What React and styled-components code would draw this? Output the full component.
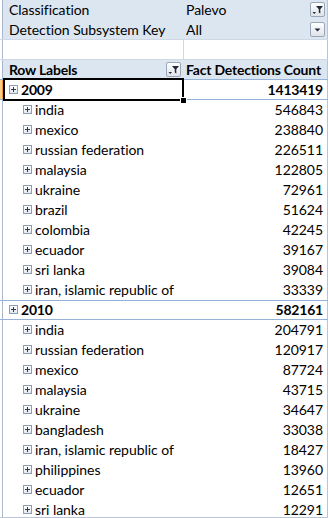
import React from "react";
import styled, { createGlobalStyle } from "styled-components";

const GlobalStyle = createGlobalStyle`
  html, body {
    margin: 0;
    padding: 0;
    background: #ffffff;
  }
  body {
    font-family: Lato, "Open Sans", "Liberation Sans", sans-serif;
    font-size: 14px;
    color: #000000;
  }
`;

const Sheet = styled.div`
  width: 328px;
  height: 517px;
  overflow: hidden;
  display: flex;
  flex-direction: column;
  border-bottom: 1px solid #b9c4d4;
  background: #ffffff;
`;

const Row = styled.div`
  display: grid;
  grid-template-columns: 3px 181px 143px 1px;
  height: 20px;
  flex: 0 0 20px;
  box-sizing: border-box;
  background: ${({ $shade }) => ($shade ? "#dce6f1" : "#ffffff")};
  border-top: ${({ $lineTop }) => ($lineTop ? "1px solid #95b3d7" : "none")};
  border-bottom: ${({ $lineBottom, $grid }) =>
    $lineBottom ? "1px solid #95b3d7" : $grid ? "1px solid #d0d7e5" : "none"};
  font-weight: ${({ $bold }) => ($bold ? 700 : 400)};
  letter-spacing: ${({ $bold }) => ($bold ? "-0.2px" : "-0.05px")};
`;

const Gutter = styled.div`
  box-sizing: border-box;
  background: ${({ $active }) => ($active ? "#f8d28c" : "#ffffff")};
  border-right: 1px solid ${({ $active }) => ($active ? "#f29436" : "#a9b8cc")};
`;

const Cell = styled.div`
  position: relative;
  box-sizing: border-box;
  display: flex;
  align-items: center;
  gap: 3px;
  padding: 0 ${({ $right }) => ($right ? "3px" : "0")} 1px
    ${({ $indent }) => $indent || 0}px;
  justify-content: ${({ $right }) => ($right ? "flex-end" : "flex-start")};
  border-right: ${({ $divider }) =>
    $divider ? "1px solid #d0d7e5" : "1px solid transparent"};
  white-space: nowrap;
  overflow: visible;

  ${({ $selected }) =>
    $selected &&
    `
    &::after {
      content: "";
      position: absolute;
      left: 0;
      top: -2px;
      right: -1px;
      bottom: -2px;
      border: 2px solid #000000;
      pointer-events: none;
    }
    &::before {
      content: "";
      position: absolute;
      right: -4px;
      bottom: -5px;
      width: 5px;
      height: 5px;
      background: #000000;
      border: 1px solid #ffffff;
      z-index: 2;
    }
  `}
`;

const EndCell = styled.div`
  border-left: 1px solid #b9c4d4;
`;

const Label = styled.span`
  flex: 1;
`;

const ButtonBox = styled.span`
  width: 15px;
  height: 15px;
  box-sizing: border-box;
  border: 1px solid #9aa6b6;
  border-radius: 2px;
  background: linear-gradient(#ffffff, #dfe4ea);
  display: flex;
  align-items: center;
  justify-content: center;
  margin-right: ${({ $gap }) => $gap || 0}px;
  flex: 0 0 auto;
`;

const Expander = styled.span`
  width: 9px;
  height: 9px;
  box-sizing: border-box;
  border: 1px solid #8d9db5;
  background: linear-gradient(#ffffff, #e3e8ef);
  display: inline-flex;
  align-items: center;
  justify-content: center;
  flex: 0 0 auto;
`;

const FilterIcon = () => (
  <svg width="13" height="13" viewBox="0 0 13 13">
    <path d="M5 3 H12 L9.3 6.3 V10.5 L7.8 9.5 V6.3 Z" fill="#1f2a3a" />
    <path d="M1.5 9 H5 L3.25 11 Z" fill="#1f2a3a" />
  </svg>
);

const ArrowIcon = () => (
  <svg width="13" height="13" viewBox="0 0 13 13">
    <path d="M3.5 5.5 H9.5 L6.5 8.5 Z" fill="#1f2a3a" />
  </svg>
);

const PlusIcon = () => (
  <svg width="7" height="7" viewBox="0 0 7 7">
    <path d="M1 3.5 H6 M3.5 1 V6" stroke="#2a3b55" strokeWidth="1" />
  </svg>
);

const filters = [
  { label: "Classification", value: "Palevo", icon: <FilterIcon /> },
  { label: "Detection Subsystem Key", value: "All", icon: <ArrowIcon /> },
];

const years = [
  {
    year: "2009",
    total: "1413419",
    items: [
      ["india", "546843"],
      ["mexico", "238840"],
      ["russian federation", "226511"],
      ["malaysia", "122805"],
      ["ukraine", "72961"],
      ["brazil", "51624"],
      ["colombia", "42245"],
      ["ecuador", "39167"],
      ["sri lanka", "39084"],
      ["iran, islamic republic of", "33339"],
    ],
  },
  {
    year: "2010",
    total: "582161",
    items: [
      ["india", "204791"],
      ["russian federation", "120917"],
      ["mexico", "87724"],
      ["malaysia", "43715"],
      ["ukraine", "34647"],
      ["bangladesh", "33038"],
      ["iran, islamic republic of", "18427"],
      ["philippines", "13960"],
      ["ecuador", "12651"],
      ["sri lanka", "12291"],
    ],
  },
];

export default function App() {
  return (
    <>
      <GlobalStyle />
      <Sheet>
        {filters.map((f, i) => (
          <Row key={f.label} $shade $grid={i === 1}>
            <Gutter />
            <Cell $indent={6}>{f.label}</Cell>
            <Cell $indent={2}>
              <Label>{f.value}</Label>
              <ButtonBox $gap={1}>{f.icon}</ButtonBox>
            </Cell>
            <EndCell />
          </Row>
        ))}

        <Row $grid>
          <Gutter />
          <Cell $divider />
          <Cell />
          <EndCell />
        </Row>

        <Row $shade $bold $lineBottom>
          <Gutter />
          <Cell $indent={6}>
            <Label>Row Labels</Label>
            <ButtonBox $gap={2}>
              <FilterIcon />
            </ButtonBox>
          </Cell>
          <Cell $indent={2}>Fact Detections Count</Cell>
          <EndCell />
        </Row>

        {years.map((y, yi) => (
          <React.Fragment key={y.year}>
            <Row $bold $lineTop={yi > 0} $lineBottom>
              <Gutter $active={yi === 0} />
              <Cell $indent={6} $selected={yi === 0}>
                <Expander>
                  <PlusIcon />
                </Expander>
                {y.year}
              </Cell>
              <Cell $right>{y.total}</Cell>
              <EndCell />
            </Row>
            {y.items.map(([name, count]) => (
              <Row key={y.year + name}>
                <Gutter />
                <Cell $indent={20}>
                  <Expander>
                    <PlusIcon />
                  </Expander>
                  {name}
                </Cell>
                <Cell $right>{count}</Cell>
                <EndCell />
              </Row>
            ))}
          </React.Fragment>
        ))}
      </Sheet>
    </>
  );
}
